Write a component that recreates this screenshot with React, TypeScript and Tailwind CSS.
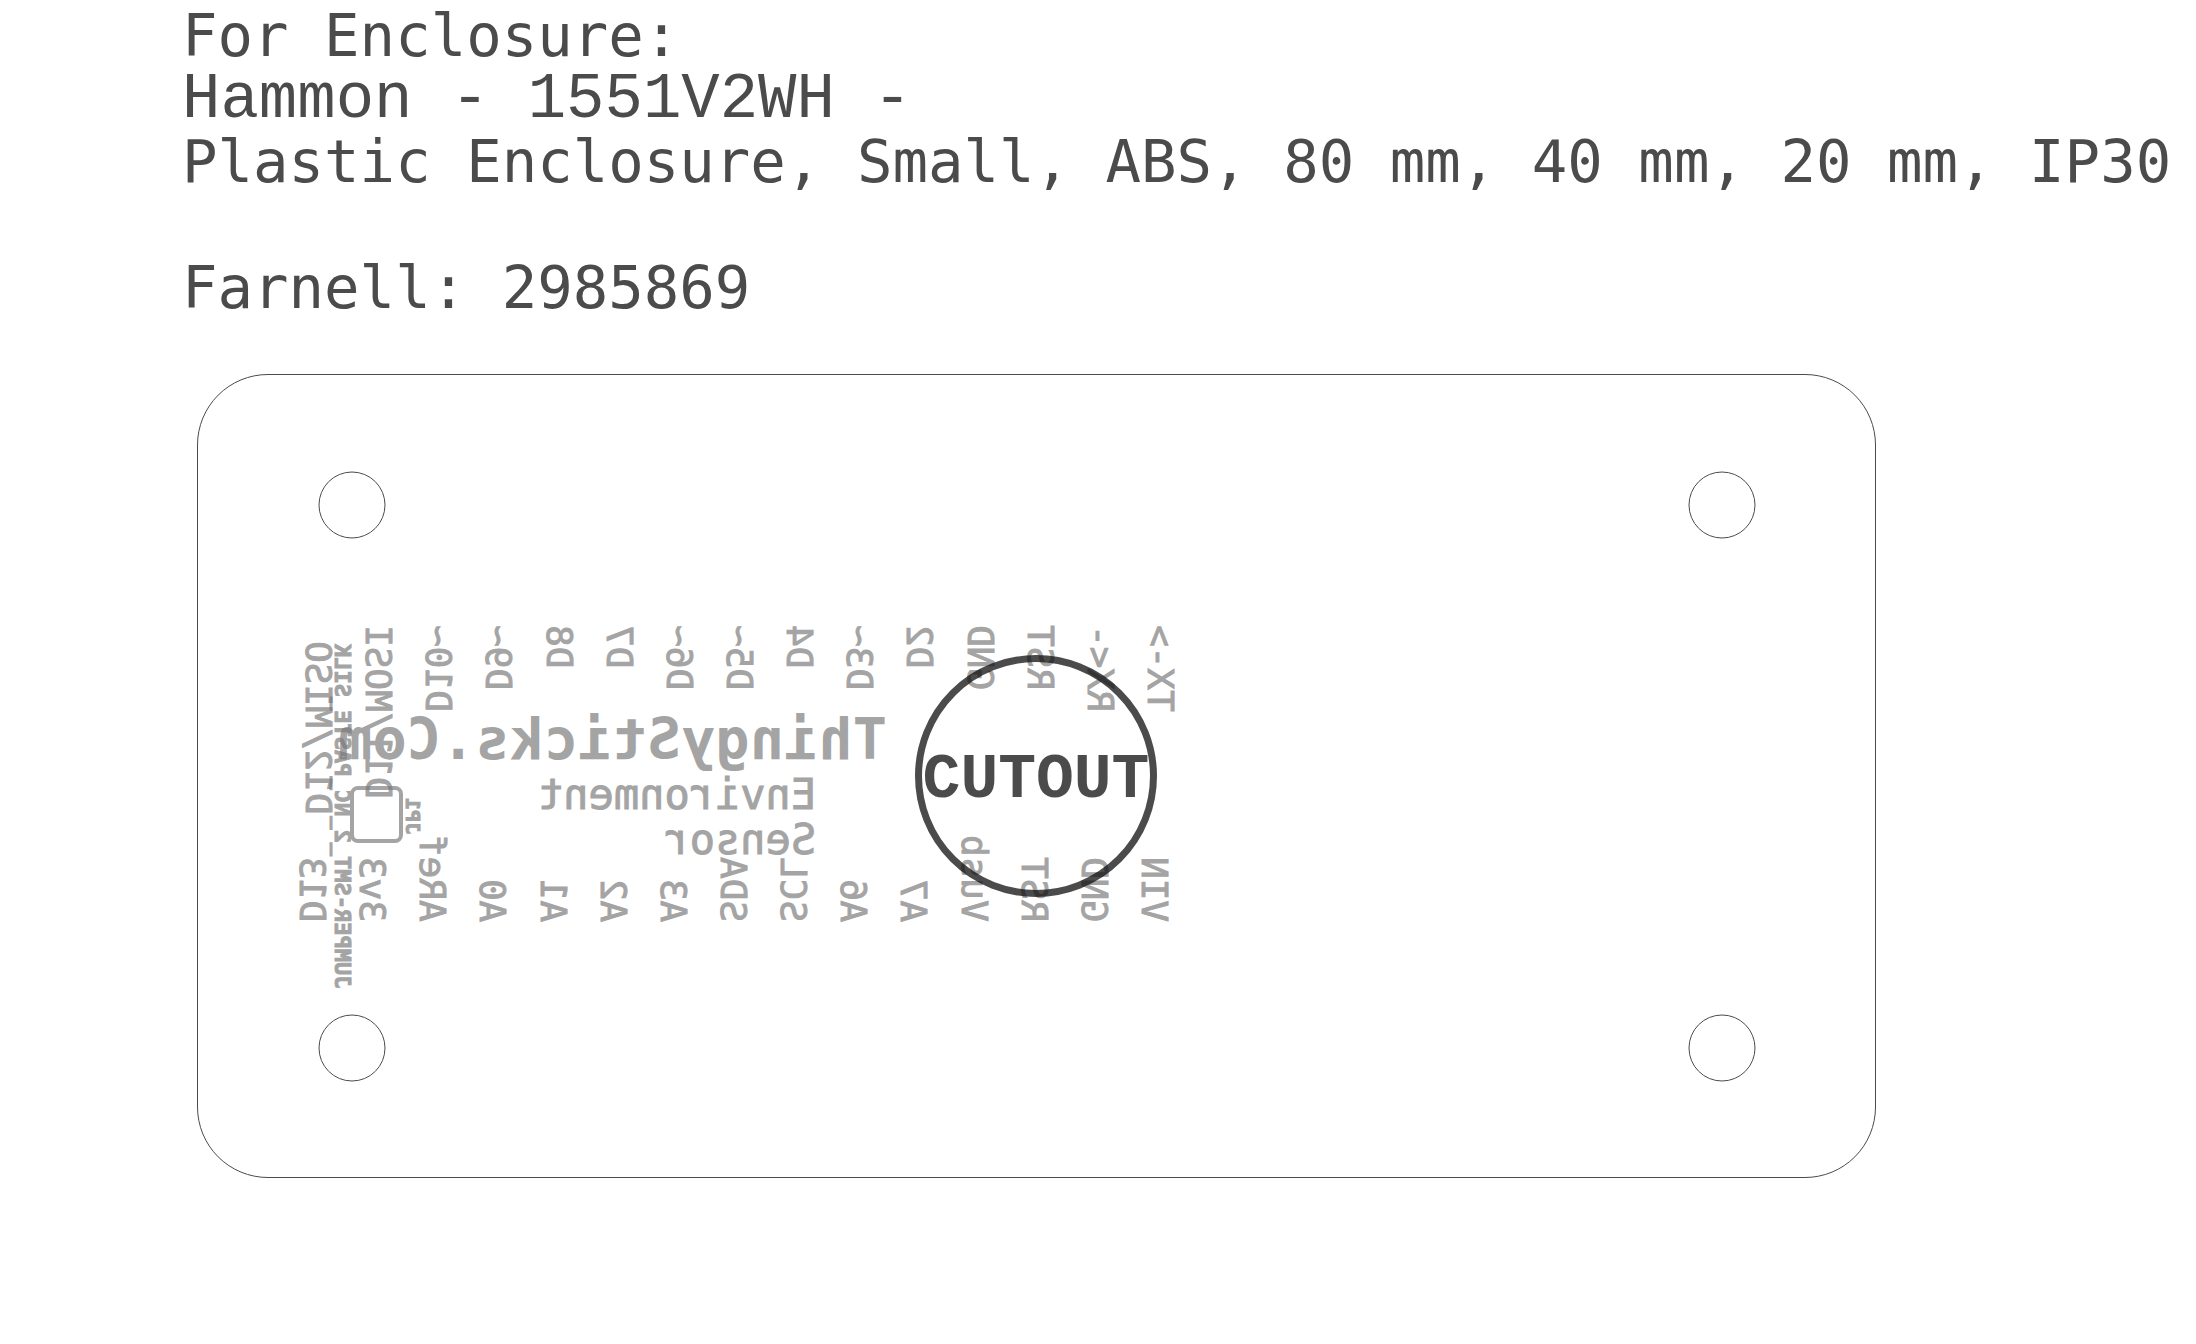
import React from "react";

const MONO = "font-['DejaVu_Sans_Mono','Liberation_Mono',monospace]";
const WIDE = "font-['Liberation_Mono','DejaVu_Sans_Mono',monospace]";

const topPins = [
  "D12/MISO", "D11/MOSI", "D10~", "D9~", "D8", "D7", "D6~", "D5~",
  "D4", "D3~", "D2", "GND", "RST", "RX<-", "TX->",
];
const bottomPins = [
  "D13", "3v3", "ARef", "A0", "A1", "A2", "A3", "SDA",
  "SCL", "A6", "A7", "Vusb", "RST", "GND", "VIN",
];

const holes = [
  [154, 130],
  [1524, 130],
  [154, 673],
  [1524, 673],
];

function Pin({ name, className = "" }: { name: string; className?: string }) {
  return (
    <span className={`-scale-y-100 whitespace-nowrap [writing-mode:vertical-rl] ${className}`}>
      {name}
    </span>
  );
}

function Holes() {
  return (
    <svg className="absolute inset-0 h-full w-full" fill="none" stroke="#4b4b4b" aria-hidden="true">
      {holes.map(([x, y]) => (
        <circle key={`${x}-${y}`} cx={x} cy={y} r={33} />
      ))}
    </svg>
  );
}

export default function App() {
  return (
    <main className="min-h-screen overflow-hidden bg-white pt-1 text-[#4b4b4b]">
      <header className={`flex flex-col pl-[182px] text-[59px] leading-[63px] whitespace-nowrap ${MONO}`}>
        <p>For Enclosure:</p>
        <p className={`pt-1 text-[64px] leading-[59px] ${WIDE}`}>Hammon - 1551V2WH -</p>
        <p>Plastic Enclosure, Small, ABS, 80 mm, 40 mm, 20 mm, IP30</p>
        <p className="pt-[63px]">Farnell: 2985869</p>
      </header>

      <section
        aria-label="Circuit board"
        className={`relative mt-[55px] ml-[197px] h-[804px] w-[1679px] rounded-[71px] border border-[#4b4b4b] ${MONO}`}
      >
        <Holes />

        <div className="absolute inset-0 flex flex-col items-start pt-[250px] pl-[84px] text-[#787878] opacity-[.67]">
          <div className="ml-[6px] grid h-[81px] w-[902px] grid-cols-15 justify-items-center text-4xl leading-[60px] [-webkit-text-stroke:1px]">
            {topPins.map((name) => (
              <div key={name} className={name === "D12/MISO" ? "pt-4" : ""}>
                <Pin name={name} />
              </div>
            ))}
          </div>
          <p className="ml-[56px] -scale-x-100 text-[57px] leading-[66px] font-bold">ThingySticks.Com</p>
          <p className="ml-[256px] -scale-x-100 text-[42px] leading-[45px] [-webkit-text-stroke:1px]">
            Environment
            <br />
            Sensor
          </p>
          <div className="flex h-[60px] w-[902px] items-end text-4xl leading-[60px] [-webkit-text-stroke:1px]">
            {bottomPins.map((name) => (
              <div key={name} className="flex flex-1 justify-center">
                <Pin name={name} />
              </div>
            ))}
          </div>
        </div>

        <div className="absolute inset-0 flex items-center pt-[80px] pl-[132px] text-[22px] leading-6 font-bold text-[#787878] opacity-[.67] [-webkit-text-stroke:1px]">
          <Pin name="JUMPER-SMT_2_NC_PASTE_SILK" />
          <div className="-mt-1 -ml-1 h-[57px] w-[53px] rounded-lg border-4 border-[#787878]" />
          <Pin name="JP1" className="-ml-1 text-xl" />
        </div>

        <div
          className={`absolute top-[280px] left-[717px] flex size-[242px] items-center justify-center rounded-full border-[7px] border-[#0f0f0f] pt-2 text-[63px] leading-none font-bold text-[#0f0f0f] opacity-75 ${WIDE}`}
        >
          CUTOUT
        </div>
      </section>
    </main>
  );
}
